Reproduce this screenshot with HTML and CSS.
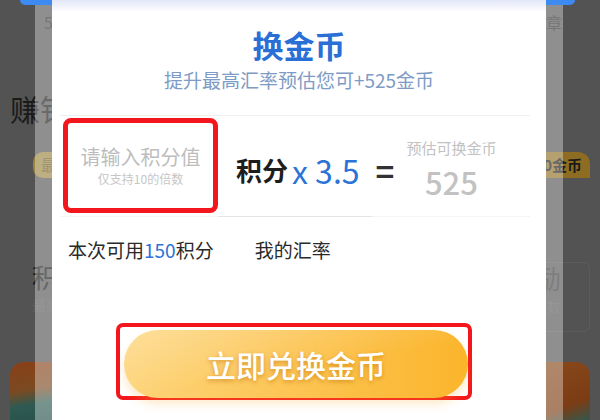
FILE: index.html
```html
<!DOCTYPE html>
<html lang="zh-CN">

<head>
    <meta charset="UTF-8">
    <meta name="viewport" content="width=device-width, initial-scale=1.0">
    <title>换金币</title>
    <link rel="stylesheet" href="styles.css">
</head>

<body>
    <div class="screen">
        <!-- page behind the dialog -->
        <div class="page">
            <div class="top-bar"></div>
            <div class="top-line"><span>5</span><span>章</span></div>
            <h2 class="earn">赚钱任务</h2>
            <div class="chips">
                <span class="chip">最高</span>
                <span class="chip chip-right">10金币</span>
            </div>
            <div class="tasks">
                <div class="task">
                    <div class="task-name">积分</div>
                    <div class="task-desc">最高</div>
                </div>
                <div class="task task-right">
                    <div class="task-name">奖励</div>
                    <div class="task-desc">次数</div>
                </div>
            </div>
            <div class="banners">
                <div class="banner"></div>
                <div class="banner banner-right"></div>
            </div>
        </div>

        <!-- exchange dialog -->
        <div class="overlay">
            <div class="dialog">
                <h1 class="title">换金币</h1>
                <p class="subtitle">提升最高汇率预估您可+525金币</p>

                <div class="calc">
                    <div class="input-box">
                        <div class="placeholder">请输入积分值</div>
                        <div class="hint">仅支持10的倍数</div>
                    </div>
                    <div class="formula">
                        <span class="unit">积分</span>
                        <span class="rate">x 3.5</span>
                        <span class="equals">=</span>
                        <div class="estimate">
                            <span class="estimate-label">预估可换金币</span>
                            <span class="estimate-value">525</span>
                        </div>
                    </div>
                </div>
                <div class="divider"></div>

                <div class="balance">
                    <span>本次可用<em>150</em>积分</span>
                    <span>我的汇率</span>
                </div>

                <div class="action">
                    <button class="exchange-btn">立即兑换金币</button>
                </div>
            </div>
        </div>
    </div>
</body>

</html>
```

FILE: styles.css
```css
* {
    box-sizing: border-box;
    margin: 0;
    padding: 0;
}

body {
    width: 600px;
    height: 420px;
    overflow: hidden;
    background-color: #535353;
    font-family: "Noto Sans CJK SC", "Noto Sans", sans-serif;
}

.screen {
    position: relative;
    width: 600px;
    height: 420px;
    overflow: hidden;
}

/* background page (already dimmed) */
.top-bar {
    height: 5px;
    margin: 0 25px 0 20px;
    background-color: #3d8af2;
    border-radius: 0 0 10px 10px;
}

.top-line {
    display: flex;
    justify-content: space-between;
    padding: 6px 38px 0 44px;
    font-size: 16px;
    line-height: 22px;
    color: #2e2e2e;
}

.earn {
    margin-top: 57px;
    padding-left: 10px;
    font-size: 30px;
    line-height: 36px;
    font-weight: normal;
    color: #1a1a1a;
}

.chips {
    display: flex;
    justify-content: space-between;
    margin-top: 26px;
    padding: 0 10px 0 33px;
}

.chip {
    height: 26px;
    padding: 0 8px;
    font-size: 15px;
    line-height: 26px;
    color: #6b5a26;
    background-color: #9c8440;
    border-radius: 10px 0 0 10px;
}

.chip-right {
    font-weight: bold;
    color: #1a1a1a;
    background-color: #8e6d22;
    border-radius: 0 12px 0 0;
}

.tasks {
    display: flex;
    justify-content: space-between;
    align-items: flex-start;
    margin-top: 84px;
    padding: 0 10px 0 32px;
}

.task-name {
    font-size: 26px;
    line-height: 30px;
    color: #151515;
}

.task-desc {
    margin-top: 4px;
    font-size: 14px;
    line-height: 18px;
    color: #5e5e5e;
}

.task-right {
    width: 120px;
    height: 70px;
    padding-right: 28px;
    text-align: right;
    border: 1px solid #5c5c5c;
    border-radius: 6px;
}

.task-right .task-name {
    color: #3a3a3a;
}

.banners {
    display: flex;
    justify-content: space-between;
    margin-top: 30px;
    padding: 0 10px;
}

.banner {
    width: 100px;
    height: 60px;
    border-radius: 14px 14px 0 0;
    background: linear-gradient(170deg, #8a3f16 0%, #7a4a22 40%, #2d5a52 60%, #264c45 100%);
}

.banner-right {
    width: 60px;
    background: linear-gradient(160deg, #8a4a1c 0%, #7c3c14 70%, #2d5a52 100%);
}

/* dialog */
.overlay {
    position: absolute;
    left: 35px;
    top: 5px;
    bottom: 0;
    width: 528px;
    border-left: 17px solid rgba(255, 255, 255, 0.35);
    border-right: 17px solid rgba(255, 255, 255, 0.35);
}

.dialog {
    margin-top: -5px;
    height: 420px;
    background: linear-gradient(#e2e6f6, #ffffff 12px);
}

.title {
    padding-top: 28px;
    font-size: 31px;
    line-height: 34px;
    font-weight: bold;
    text-align: center;
    color: #2a6fd6;
}

.subtitle {
    margin-top: 6px;
    font-size: 19px;
    line-height: 24px;
    text-align: center;
    color: #7d9bc5;
}

.calc {
    display: flex;
    align-items: center;
    margin: 23px 16px 0 8px;
    padding: 2px 0 3px 3px;
    border-top: 1px solid #efefef;
    border-bottom: 1px solid #f5f5f5;
}

.input-box {
    width: 155px;
    height: 95px;
    display: flex;
    flex-direction: column;
    justify-content: center;
    align-items: center;
    border: 5px solid #f3161c;
    border-radius: 8px;
}

.placeholder {
    font-size: 20px;
    line-height: 26px;
    color: #bdbdbd;
}

.hint {
    font-size: 12px;
    line-height: 18px;
    color: #c6c6c6;
}

.formula {
    display: flex;
    align-items: center;
    margin-left: 18px;
    padding-top: 8px;
}

.unit {
    font-size: 26px;
    font-weight: bold;
    color: #1d1d1d;
}

.rate {
    margin-left: 4px;
    font-size: 32px;
    line-height: 40px;
    color: #2b73d6;
}

.equals {
    margin-left: 16px;
    font-size: 32px;
    line-height: 40px;
    font-weight: bold;
    color: #333;
}

.estimate {
    display: flex;
    flex-direction: column;
    align-items: center;
    margin: 2px 0 0 12px;
    color: #c2c2c2;
}

.estimate-label {
    font-size: 15px;
    line-height: 22px;
}

.estimate-value {
    font-size: 31px;
    line-height: 45px;
    font-weight: 500;
}

.divider {
    width: 154px;
    height: 1px;
    margin: -1px 0 0 166px;
    background-color: #e4e4e4;
}

.balance {
    display: flex;
    gap: 41px;
    margin: 20px 0 0 16px;
    font-size: 19px;
    line-height: 26px;
    color: #2a2a2a;
}

.balance em {
    font-style: normal;
    color: #2b73d6;
}

.action {
    width: 356px;
    height: 77px;
    margin: 60px 0 0 64px;
    padding: 3px 0 0 4px;
    border: 4px solid #f3161c;
    border-radius: 7px;
}

.exchange-btn {
    width: 100%;
    height: 68px;
    border: none;
    border-radius: 34px;
    font-family: inherit;
    font-size: 30px;
    font-weight: 500;
    color: #fff;
    text-shadow: 0 2px 4px rgba(190, 110, 0, 0.55);
    background:
        linear-gradient(170deg, rgba(255, 255, 255, 0.25), rgba(255, 255, 255, 0) 55%),
        linear-gradient(90deg, #fdd47a, #fbb52c);
    box-shadow: 0 6px 10px rgba(250, 170, 40, 0.25);
    cursor: pointer;
}
```
